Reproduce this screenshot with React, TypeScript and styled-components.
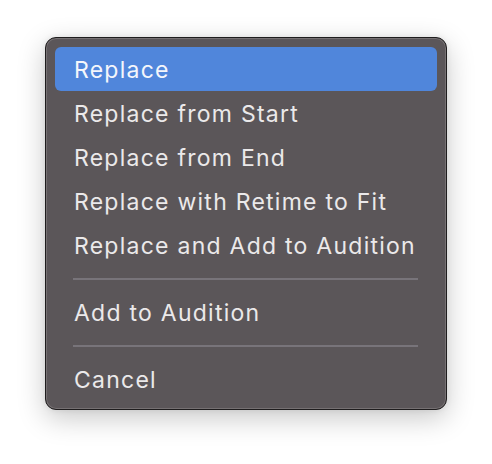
import styled, { createGlobalStyle } from 'styled-components';

const GlobalStyle = createGlobalStyle`
  html, body {
    margin: 0;
    padding: 0;
    background: #ffffff;
  }
  body {
    font-family: Inter, "Noto Sans", sans-serif;
  }
`;

const Page = styled.div`
  width: 492px;
  height: 464px;
  display: flex;
  align-items: flex-start;
  padding: 37px 0 0 45px;
  box-sizing: border-box;
`;

const Menu = styled.ul`
  width: 402px;
  box-sizing: border-box;
  margin: 0;
  padding: 9px 9px 8px;
  list-style: none;
  background: #5b5659;
  border: 1px solid #1f1d1e;
  border-radius: 11px;
  box-shadow: inset 0 0 0 1px #767173, 0 8px 28px rgba(0, 0, 0, 0.22),
    0 0 6px rgba(0, 0, 0, 0.08);
`;

const Item = styled.li<{ active?: boolean }>`
  height: 44px;
  display: flex;
  align-items: center;
  padding: 1px 19px 0;
  box-sizing: border-box;
  border-radius: 6px;
  font-size: 23px;
  font-weight: 400;
  letter-spacing: 1.25px;
  color: ${(props) => (props.active ? '#f4f6fb' : '#ebe9ea')};
  background: ${(props) => (props.active ? '#5086db' : 'transparent')};
  white-space: nowrap;
`;

const Separator = styled.li`
  height: 23px;
  display: flex;
  align-items: center;
  padding: 0 19px 0 18px;
  &::after {
    content: '';
    flex: 1;
    height: 2px;
    background: #78747a;
  }
`;

const groups = [
  [
    'Replace',
    'Replace from Start',
    'Replace from End',
    'Replace with Retime to Fit',
    'Replace and Add to Audition',
  ],
  ['Add to Audition'],
  ['Cancel'],
];

const App = () => {
  return (
    <>
      <GlobalStyle />
      <Page>
        <Menu>
          {groups.map((group, g) => [
            g > 0 ? <Separator key={`sep-${g}`} /> : null,
            ...group.map((text, i) => (
              <Item key={`item-${g}-${i}`} active={g === 0 && i === 0}>
                {text}
              </Item>
            )),
          ])}
        </Menu>
      </Page>
    </>
  );
};

export default App;
